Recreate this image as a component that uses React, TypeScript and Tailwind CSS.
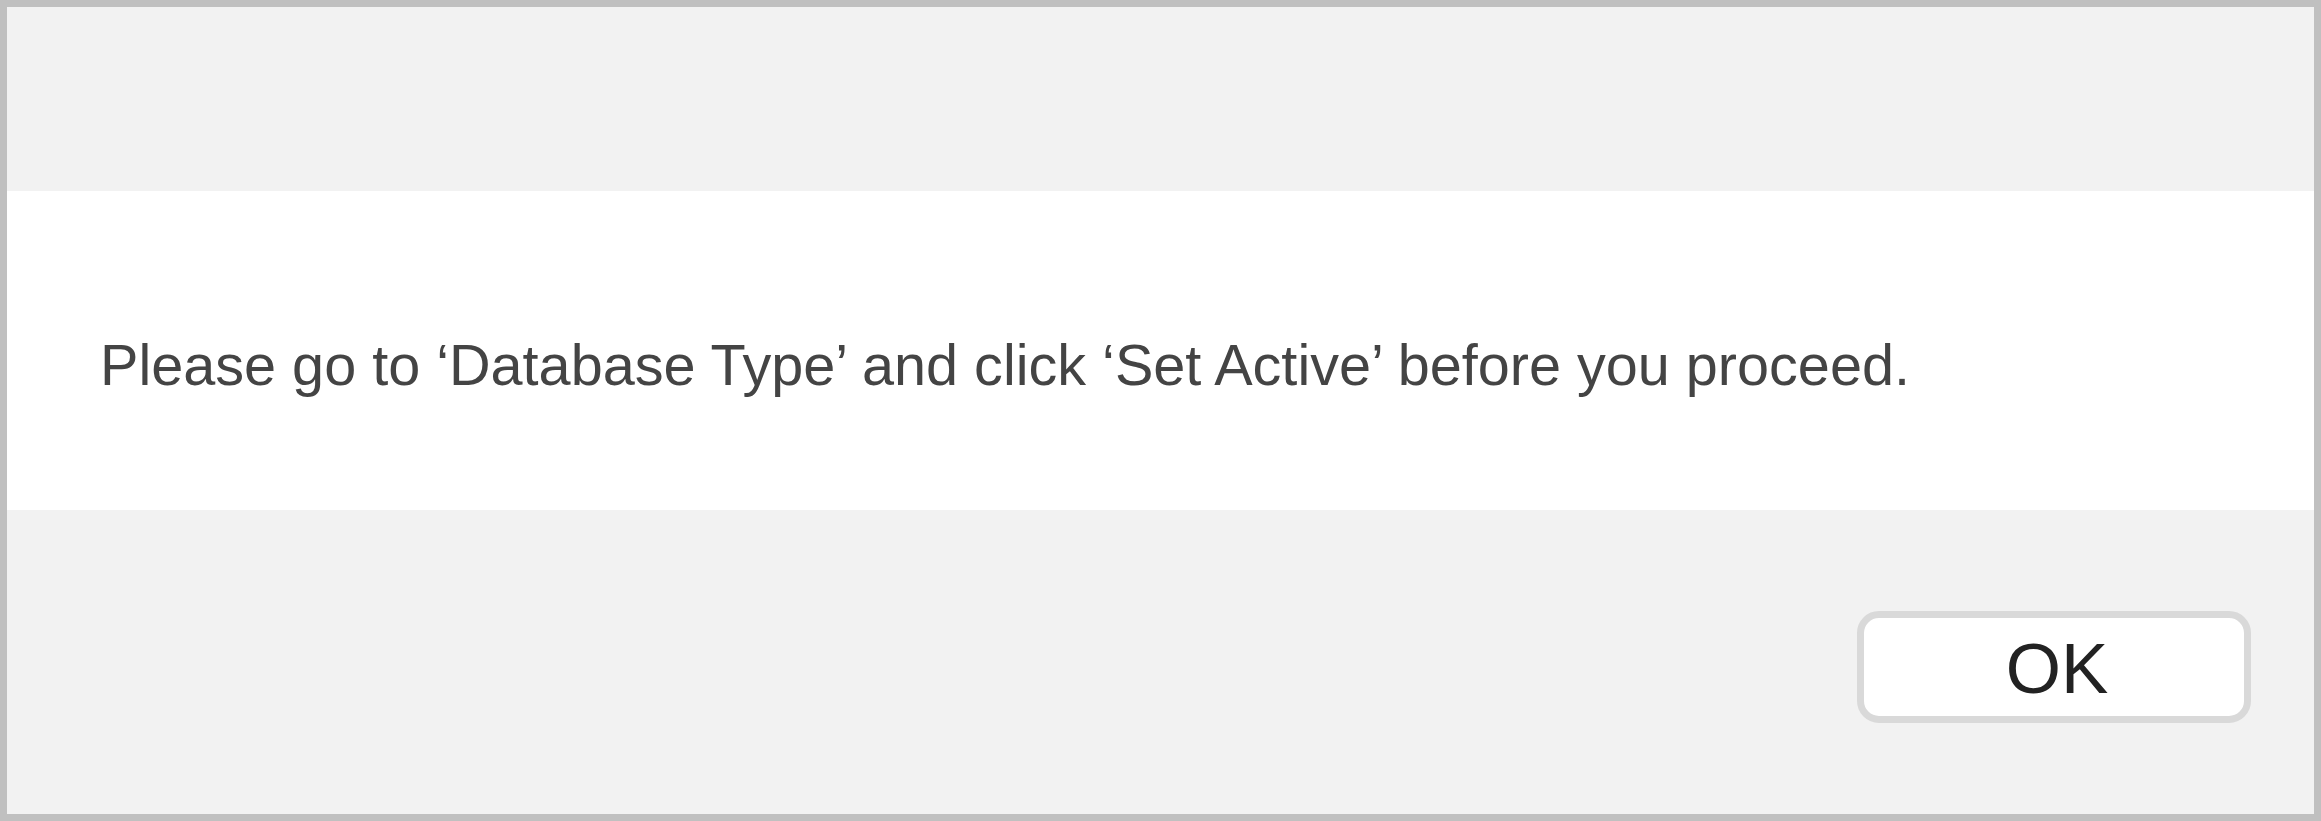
import * as React from 'react';

export default function App() {
    return (
        <div
            className="w-full h-[821px] border-[7px] border-[#c0c0c0] bg-[#f2f2f2] flex flex-col"
            style={{ fontFamily: '"Liberation Sans", Arial, sans-serif' }}
        >
            {/* Top spacer */}
            <div className="h-[184px] shrink-0"></div>

            {/* Message band */}
            <div className="h-[319px] shrink-0 bg-white pl-[93px] pt-[146px]">
                <p className="text-[57.6px] leading-none text-[#444444] whitespace-nowrap">
                    Please go to ‘Database Type’ and click ‘Set Active’ before you proceed.
                </p>
            </div>

            {/* Footer with button */}
            <div className="flex-1 flex flex-row justify-end pt-[101px] pr-[63px]">
                <button className="w-[394px] h-[112px] rounded-[22px] border-[7px] border-[#d9d9d9] bg-white flex items-center justify-center text-[71px] leading-none text-[#222222] pl-[6px] pt-[2px]">
                    OK
                </button>
            </div>
        </div>
    )
}
